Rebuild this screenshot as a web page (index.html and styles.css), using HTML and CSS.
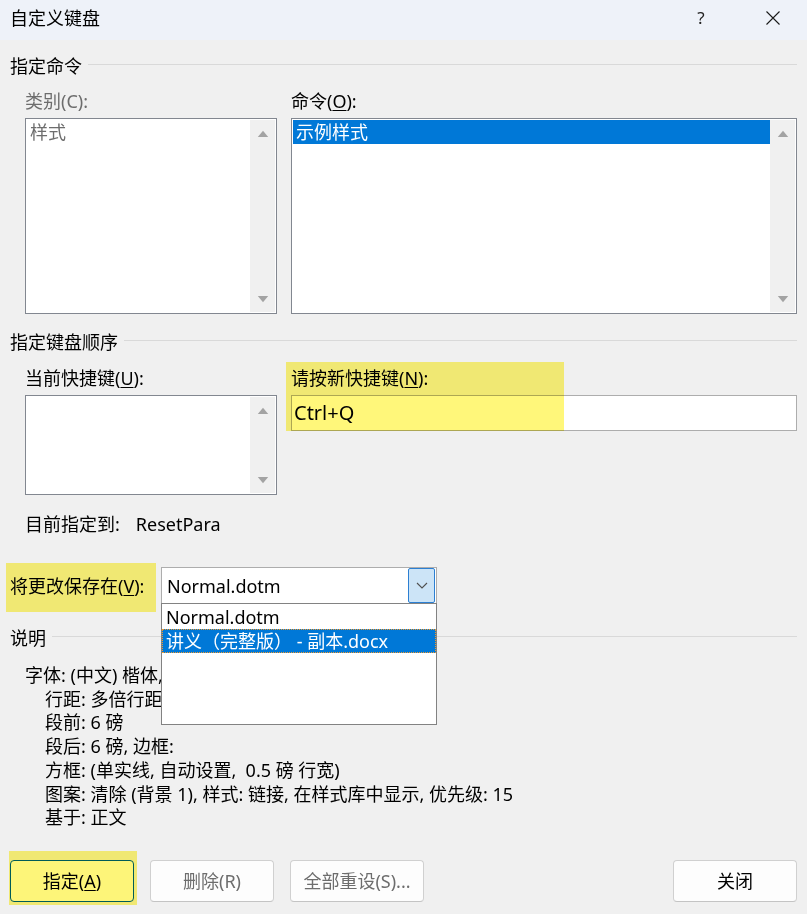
FILE: index.html
```html
<!DOCTYPE html>
<html lang="zh-CN">
<head>
<meta charset="utf-8">
<title>自定义键盘</title>
<link rel="stylesheet" href="styles.css">
</head>
<body>
<div class="window">
  <div class="titlebar">
    <span class="title">自定义键盘</span>
    <div class="controls">
      <span class="help">?</span>
      <span class="close"><svg width="16" height="16" viewBox="0 0 16 16"><path d="M1.5 1.5 L14.5 14.5 M14.5 1.5 L1.5 14.5" stroke="#1a1a1a" stroke-width="1.1" fill="none"/></svg></span>
    </div>
  </div>

  <div class="content">
    <div class="group-head"><span>指定命令</span><i class="rule"></i></div>
    <div class="cols cols-top">
      <div class="col">
        <div class="label disabled">类别(C):</div>
        <div class="listbox lb-tall">
          <div class="items"><div class="item disabled">样式</div></div>
          <div class="scrollbar">
            <span class="arrow"><svg width="12" height="8" viewBox="0 0 12 8"><path d="M6 0.8 L11.2 7 L0.8 7 Z" fill="#a3a3a3"/></svg></span>
            <span class="arrow"><svg width="12" height="8" viewBox="0 0 12 8"><path d="M0.8 1 L11.2 1 L6 7.2 Z" fill="#a3a3a3"/></svg></span>
          </div>
        </div>
      </div>
      <div class="col">
        <div class="label">命令(<u>O</u>):</div>
        <div class="listbox lb-tall">
          <div class="items"><div class="item selected">示例样式</div></div>
          <div class="scrollbar">
            <span class="arrow"><svg width="12" height="8" viewBox="0 0 12 8"><path d="M6 0.8 L11.2 7 L0.8 7 Z" fill="#a3a3a3"/></svg></span>
            <span class="arrow"><svg width="12" height="8" viewBox="0 0 12 8"><path d="M0.8 1 L11.2 1 L6 7.2 Z" fill="#a3a3a3"/></svg></span>
          </div>
        </div>
      </div>
    </div>

    <div class="group-head gh2"><span>指定键盘顺序</span><i class="rule"></i></div>
    <div class="cols cols-keys">
      <div class="col">
        <div class="label">当前快捷键(<u>U</u>):</div>
        <div class="listbox lb-short">
          <div class="items"></div>
          <div class="scrollbar">
            <span class="arrow"><svg width="12" height="8" viewBox="0 0 12 8"><path d="M6 0.8 L11.2 7 L0.8 7 Z" fill="#a3a3a3"/></svg></span>
            <span class="arrow"><svg width="12" height="8" viewBox="0 0 12 8"><path d="M0.8 1 L11.2 1 L6 7.2 Z" fill="#a3a3a3"/></svg></span>
          </div>
        </div>
        <div class="assigned"><span>目前指定到:</span><span>ResetPara</span></div>
      </div>
      <div class="col">
        <div class="label">请按新快捷键(<u>N</u>):</div>
        <div class="textbox">Ctrl+Q</div>
      </div>
    </div>

    <div class="save-row">
      <div class="save-label">将更改保存在(<u>V</u>):</div>
      <div class="combo">
        <span class="combo-text">Normal.dotm</span>
        <span class="combo-btn"><svg width="12" height="7" viewBox="0 0 12 7"><path d="M1 1 L6 6 L11 1" stroke="#505050" stroke-width="1.1" fill="none"/></svg></span>
      </div>
    </div>

    <div class="group-head gh3"><span>说明</span><i class="rule"></i></div>
    <div class="desc">
      <div class="line first">字体: (中文) 楷体, (默认) 宋体, 小四</div>
      <div class="line">行距: 多倍行距 1.2 字行</div>
      <div class="line">段前: 6 磅</div>
      <div class="line">段后: 6 磅, 边框:</div>
      <div class="line">方框: (单实线, 自动设置,  0.5 磅 行宽)</div>
      <div class="line">图案: 清除 (背景 1), 样式: 链接, 在样式库中显示, 优先级: 15</div>
      <div class="line">基于: 正文</div>
    </div>

    <div class="buttons">
      <button class="btn default">指定(<u>A</u>)</button>
      <button class="btn disabled">删除(R)</button>
      <button class="btn disabled wide">全部重设(S)...</button>
      <span class="spacer"></span>
      <button class="btn">关闭</button>
    </div>
  </div>

  <div class="dropdown">
    <div class="dd-item">Normal.dotm</div>
    <div class="dd-item dd-selected">讲义（完整版） - 副本.docx</div>
  </div>

  <i class="hl hl-new"></i>
  <i class="hl hl-save"></i>
  <i class="hl hl-assign"></i>
</div>
</body>
</html>
```

FILE: styles.css
```css
* { box-sizing: border-box; }

html, body {
  margin: 0;
  padding: 0;
  background: #f0f0f0;
}

body {
  font-family: "Noto Sans", "Noto Sans CJK SC", sans-serif;
  font-size: 18px;
  line-height: 24px;
  color: #000;
}

u { text-decoration: underline; text-underline-offset: 2px; text-decoration-thickness: 1px; }

.window {
  position: relative;
  width: 807px;
  height: 914px;
  background: #f0f0f0;
  overflow: hidden;
}

.titlebar {
  height: 40px;
  background: #eef2f9;
  display: flex;
  align-items: center;
  padding: 0 0 4px 10px;
}

.title { flex: 1; }

.controls {
  display: flex;
  align-items: center;
}

.help {
  width: 20px;
  text-align: center;
  color: #222;
  font-size: 17px;
  margin-right: 54px;
}

.close {
  display: flex;
  width: 16px;
  height: 16px;
  margin-right: 26px;
}

.content {
  padding: 0 10px;
}

.group-head {
  display: flex;
  align-items: center;
  gap: 6px;
  margin-top: 14px;
  height: 24px;
}

.group-head .rule {
  flex: 1;
  height: 1px;
  background: #d9d9d9;
  margin-top: -3px;
}

.gh2 { margin-top: 16px; }
.gh3 { margin-top: 22px; }

.cols {
  display: grid;
  grid-template-columns: 252px 1fr;
  column-gap: 14px;
  margin-left: 15px;
}

.cols-top { margin-top: 11px; }
.cols-keys { margin-top: 12px; }

.label { height: 24px; }
.col .label + * { margin-top: 5px; }

.disabled { color: #6d6d6d; }

.listbox {
  display: flex;
  background: #fff;
  border: 1px solid #828790;
  padding: 1px;
}

.lb-tall { height: 196px; }
.lb-short { height: 100px; }

.items { flex: 1; }

.item {
  height: 24px;
  padding-left: 3px;
}

.item.selected {
  background: #0078d7;
  color: #fff;
}

.scrollbar {
  width: 25px;
  background: #f0f0f0;
  display: flex;
  flex-direction: column;
  justify-content: space-between;
}

.arrow {
  height: 27px;
  display: flex;
  align-items: center;
  justify-content: center;
}

.assigned {
  margin-top: 17px;
  display: flex;
  gap: 16px;
}

.textbox {
  height: 36px;
  background: #fff;
  border: 1px solid #adadad;
  padding: 3px 0 0 2px;
  font-size: 20px;
  line-height: 28px;
}

.save-row {
  display: flex;
  align-items: center;
  margin-top: 31px;
}

.save-label { width: 151px; }

.combo {
  width: 276px;
  height: 37px;
  background: #fff;
  border: 1px solid #adadad;
  border-bottom-color: #828282;
  display: flex;
  align-items: center;
  justify-content: space-between;
  padding: 0 1px 0 5px;
}

.combo-btn {
  width: 27px;
  height: 35px;
  background: #cce4f7;
  border: 1px solid #2c7fd2;
  border-radius: 2px;
  display: flex;
  align-items: center;
  justify-content: center;
}

.desc {
  margin-top: 14px;
  padding-left: 35px;
}

.line {
  line-height: 23.7px;
  white-space: pre;
}

.line.first { margin-left: -20px; }

.buttons {
  display: flex;
  margin-top: 30px;
  gap: 16px;
}

.spacer { flex: 1; }

.btn {
  font: inherit;
  width: 124px;
  height: 42px;
  background: #fdfdfd;
  border: 1px solid #d0d0d0;
  border-bottom-color: #c4c4c4;
  border-radius: 4px;
  color: #000;
  padding: 0;
}

.btn.wide { width: 134px; }
.btn.disabled { color: #6d6d6d; }
.btn.default { border-color: #005fb8; }

.dropdown {
  position: absolute;
  left: 161px;
  top: 603px;
  width: 276px;
  height: 122px;
  background: #fff;
  border: 1px solid #828282;
  padding-top: 1px;
  z-index: 2;
}

.dd-item {
  height: 24px;
  padding-left: 4px;
  white-space: nowrap;
}

.dd-selected {
  background: #0078d7;
  color: #fff;
  border: 1px dotted #f39a2d;
  padding-left: 3px;
  line-height: 22px;
}

.hl {
  position: absolute;
  background: #fff77a;
  mix-blend-mode: multiply;
  z-index: 3;
}

.hl-new { left: 286px; top: 362px; width: 278px; height: 69px; }
.hl-save { left: 6px; top: 563px; width: 150px; height: 49px; }
.hl-assign { left: 9px; top: 851px; width: 128px; height: 54px; }
```
